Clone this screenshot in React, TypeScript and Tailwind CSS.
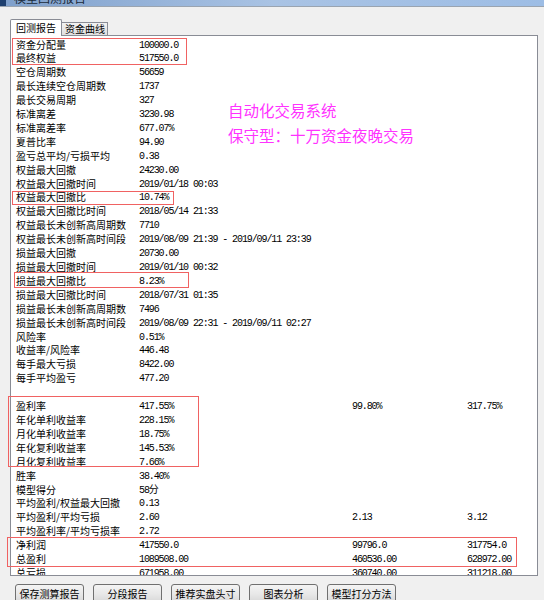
import React from "react";

type Row = { label: string; v1?: string; v2?: string; v3?: string };

const rows: Row[] = [
  { label: "资金分配量", v1: "100000.0" },
  { label: "最终权益", v1: "517550.0" },
  { label: "空仓周期数", v1: "56659" },
  { label: "最长连续空仓周期数", v1: "1737" },
  { label: "最长交易周期", v1: "327" },
  { label: "标准离差", v1: "3230.98" },
  { label: "标准离差率", v1: "677.07%" },
  { label: "夏普比率", v1: "94.90" },
  { label: "盈亏总平均/亏损平均", v1: "0.38" },
  { label: "权益最大回撤", v1: "24230.00" },
  { label: "权益最大回撤时间", v1: "2019/01/18 00:03" },
  { label: "权益最大回撤比", v1: "10.74%" },
  { label: "权益最大回撤比时间", v1: "2018/05/14 21:33" },
  { label: "权益最长未创新高周期数", v1: "7710" },
  { label: "权益最长未创新高时间段", v1: "2019/08/09 21:39 - 2019/09/11 23:39" },
  { label: "损益最大回撤", v1: "20730.00" },
  { label: "损益最大回撤时间", v1: "2019/01/10 00:32" },
  { label: "损益最大回撤比", v1: "8.23%" },
  { label: "损益最大回撤比时间", v1: "2018/07/31 01:35" },
  { label: "损益最长未创新高周期数", v1: "7496" },
  { label: "损益最长未创新高时间段", v1: "2019/08/09 22:31 - 2019/09/11 02:27" },
  { label: "风险率", v1: "0.51%" },
  { label: "收益率/风险率", v1: "446.48" },
  { label: "每手最大亏损", v1: "8422.00" },
  { label: "每手平均盈亏", v1: "477.20" },
  { label: "" },
  { label: "盈利率", v1: "417.55%", v2: "99.80%", v3: "317.75%" },
  { label: "年化单利收益率", v1: "228.15%" },
  { label: "月化单利收益率", v1: "18.75%" },
  { label: "年化复利收益率", v1: "145.53%" },
  { label: "月化复利收益率", v1: "7.66%" },
  { label: "胜率", v1: "38.40%" },
  { label: "模型得分", v1: "58分" },
  { label: "平均盈利/权益最大回撤", v1: "0.13" },
  { label: "平均盈利/平均亏损", v1: "2.60", v2: "2.13", v3: "3.12" },
  { label: "平均盈利率/平均亏损率", v1: "2.72" },
  { label: "净利润", v1: "417550.0", v2: "99796.0", v3: "317754.0" },
  { label: "总盈利", v1: "1089508.00", v2: "460536.00", v3: "628972.00" },
  { label: "总亏损", v1: "671958.00", v2: "360740.00", v3: "311218.00" },
];

const buttons = ["保存测算报告", "分段报告", "推荐实盘头寸", "图表分析", "模型打分方法"];

const cjk = "font-['Noto_Sans_CJK_SC',sans-serif]";
const mono = "font-['Liberation_Mono','Noto_Sans_CJK_SC',monospace] tracking-[-1.1px]";

const Value = ({ text }: { text?: string }) => (
  <div className={`${mono} text-[10px] whitespace-nowrap pt-[2px]`}>{text}</div>
);

export default function App() {
  return (
    <div className={`relative w-[544px] h-[600px] overflow-hidden bg-[#f0f0f0] text-black ${cjk}`}>
      {/* title bar, mostly scrolled off the top */}
      <div className="h-[6px] bg-gradient-to-r from-[#7e9fcb] via-[#a9c3e4] to-[#9dbde5] flex overflow-hidden">
        <div className="w-[6px] h-full bg-[#1d3f6e]" />
        <div className="ml-[8px] -mt-[8px] text-[12px] leading-[12px] text-[#1a2a3a]">模型回测报告</div>
      </div>
      <div className="h-px bg-[#9aa4b0]" />

      {/* tab strip */}
      <div className="h-[28px] flex items-end pl-[10px]">
        <div className="h-[17px] w-[52px] bg-white border border-b-0 border-[#898c95] rounded-t-[2px] text-[10px] leading-[15px] pl-[5px] relative top-px z-10">
          回测报告
        </div>
        <div className="h-[13px] w-[46px] bg-gradient-to-b from-[#f2f2f2] to-[#e0e0e0] border border-b-0 border-l-0 border-[#898c95] text-[10px] leading-[12px] pl-[3px]">
          资金曲线
        </div>
      </div>

      {/* report panel */}
      <div className="ml-[10px] w-[528px] h-[541px] bg-white border border-[#898c95] overflow-hidden pt-[0.5px]">
        {rows.map((r, i) => (
          <div
            key={i}
            className="grid grid-cols-[123px_213px_115px_1fr] h-[13.92px] leading-[13.92px] pl-[5px] items-center"
          >
            <div className="text-[10px] whitespace-nowrap">{r.label}</div>
            <Value text={r.v1} />
            <Value text={r.v2} />
            <Value text={r.v3} />
          </div>
        ))}
      </div>

      {/* buttons */}
      <div className="flex gap-[9px] pl-[15px] mt-[8px]">
        {buttons.map((b) => (
          <button
            key={b}
            className="w-[69px] h-[20px] border border-[#707070] rounded-[3px] bg-gradient-to-b from-[#f4f4f4] via-[#e8e8e8] to-[#d6d6d6] text-[10px] leading-[16px] text-black"
          >
            {b}
          </button>
        ))}
      </div>

      {/* annotation marks */}
      <div className="absolute left-[12px] top-[38px] w-[175px] h-[27px] border border-[#f06262]" />
      <div className="absolute left-[12px] top-[191px] w-[162px] h-[14px] border border-[#f06262]" />
      <div className="absolute left-[14px] top-[272px] w-[175px] h-[16px] border border-[#f06262]" />
      <div className="absolute left-[8px] top-[396px] w-[191px] h-[71px] border border-[#f06262]" />
      <div className="absolute left-[7px] top-[537px] w-[510px] h-[30px] border border-[#f06262]" />

      <div className="absolute left-[228px] top-[98px] text-[15.5px] leading-[25px] text-[#ff33ff] whitespace-nowrap">
        <div>自动化交易系统</div>
        <div>保守型：十万资金夜晚交易</div>
      </div>
    </div>
  );
}
